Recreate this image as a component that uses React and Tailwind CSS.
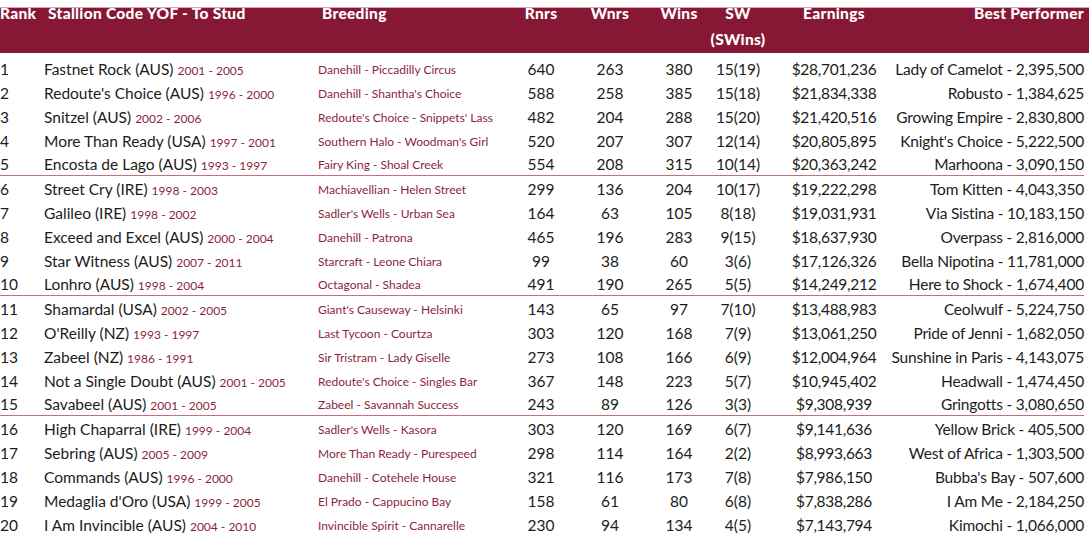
const rows = [
  ["1", "Fastnet Rock (AUS)", "2001 - 2005", "Danehill - Piccadilly Circus", "640", "263", "380", "15(19)", "$28,701,236", "Lady of Camelot - 2,395,500"],
  ["2", "Redoute's Choice (AUS)", "1996 - 2000", "Danehill - Shantha's Choice", "588", "258", "385", "15(18)", "$21,834,338", "Robusto - 1,384,625"],
  ["3", "Snitzel (AUS)", "2002 - 2006", "Redoute's Choice - Snippets' Lass", "482", "204", "288", "15(20)", "$21,420,516", "Growing Empire - 2,830,800"],
  ["4", "More Than Ready (USA)", "1997 - 2001", "Southern Halo - Woodman's Girl", "520", "207", "307", "12(14)", "$20,805,895", "Knight's Choice - 5,222,500"],
  ["5", "Encosta de Lago (AUS)", "1993 - 1997", "Fairy King - Shoal Creek", "554", "208", "315", "10(14)", "$20,363,242", "Marhoona - 3,090,150"],
  ["6", "Street Cry (IRE)", "1998 - 2003", "Machiavellian - Helen Street", "299", "136", "204", "10(17)", "$19,222,298", "Tom Kitten - 4,043,350"],
  ["7", "Galileo (IRE)", "1998 - 2002", "Sadler's Wells - Urban Sea", "164", "63", "105", "8(18)", "$19,031,931", "Via Sistina - 10,183,150"],
  ["8", "Exceed and Excel (AUS)", "2000 - 2004", "Danehill - Patrona", "465", "196", "283", "9(15)", "$18,637,930", "Overpass - 2,816,000"],
  ["9", "Star Witness (AUS)", "2007 - 2011", "Starcraft - Leone Chiara", "99", "38", "60", "3(6)", "$17,126,326", "Bella Nipotina - 11,781,000"],
  ["10", "Lonhro (AUS)", "1998 - 2004", "Octagonal - Shadea", "491", "190", "265", "5(5)", "$14,249,212", "Here to Shock - 1,674,400"],
  ["11", "Shamardal (USA)", "2002 - 2005", "Giant's Causeway - Helsinki", "143", "65", "97", "7(10)", "$13,488,983", "Ceolwulf - 5,224,750"],
  ["12", "O'Reilly (NZ)", "1993 - 1997", "Last Tycoon - Courtza", "303", "120", "168", "7(9)", "$13,061,250", "Pride of Jenni - 1,682,050"],
  ["13", "Zabeel (NZ)", "1986 - 1991", "Sir Tristram - Lady Giselle", "273", "108", "166", "6(9)", "$12,004,964", "Sunshine in Paris - 4,143,075"],
  ["14", "Not a Single Doubt (AUS)", "2001 - 2005", "Redoute's Choice - Singles Bar", "367", "148", "223", "5(7)", "$10,945,402", "Headwall - 1,474,450"],
  ["15", "Savabeel (AUS)", "2001 - 2005", "Zabeel - Savannah Success", "243", "89", "126", "3(3)", "$9,308,939", "Gringotts - 3,080,650"],
  ["16", "High Chaparral (IRE)", "1999 - 2004", "Sadler's Wells - Kasora", "303", "120", "169", "6(7)", "$9,141,636", "Yellow Brick - 405,500"],
  ["17", "Sebring (AUS)", "2005 - 2009", "More Than Ready - Purespeed", "298", "114", "164", "2(2)", "$8,993,663", "West of Africa - 1,303,500"],
  ["18", "Commands (AUS)", "1996 - 2000", "Danehill - Cotehele House", "321", "116", "173", "7(8)", "$7,986,150", "Bubba's Bay - 507,600"],
  ["19", "Medaglia d'Oro (USA)", "1999 - 2005", "El Prado - Cappucino Bay", "158", "61", "80", "6(8)", "$7,838,286", "I Am Me - 2,184,250"],
  ["20", "I Am Invincible (AUS)", "2004 - 2010", "Invincible Spirit - Cannarelle", "230", "94", "134", "4(5)", "$7,143,794", "Kimochi - 1,066,000"],
]

function Row({ r, divider }) {
  return (
    <div
      className={
        "flex h-[24px] items-center pt-[3px] text-[15.5px] text-[#1c1c1c] " +
        (divider ? "border-b border-[#c56f86]" : "")
      }
    >
      <div className="w-[44px] shrink-0">{r[0]}</div>
      <div className="w-[274px] shrink-0 whitespace-nowrap">
        {r[1]} <span className="text-[12px] text-[#8b1f40]">{r[2]}</span>
      </div>
      <div className="w-[192px] shrink-0 whitespace-nowrap text-[12px] text-[#8b1f40]">{r[3]}</div>
      <div className="w-[62px] shrink-0 text-center">{r[4]}</div>
      <div className="w-[76px] shrink-0 text-center">{r[5]}</div>
      <div className="w-[62px] shrink-0 text-center">{r[6]}</div>
      <div className="w-[56px] shrink-0 text-center">{r[7]}</div>
      <div className="flex w-[136px] shrink-0 justify-center whitespace-nowrap tracking-[-0.3px]">{r[8]}</div>
      <div className="flex w-[182px] shrink-0 justify-end whitespace-nowrap tracking-[-0.2px]">{r[9]}</div>
    </div>
  )
}

export default function App() {
  return (
    <div className="h-[555px] w-[1089px] overflow-hidden bg-white font-['Lato',sans-serif] leading-none">
      <div className="mt-[7px] h-[46px] border-t border-[#d7a3b2] bg-[#861836]">
        <div className="-mt-[8px] flex pr-[5px] text-[15.5px] font-black leading-[26px] tracking-[0.3px] text-white">
          <div className="w-[44px] shrink-0">Rank</div>
          <div className="w-[274px] shrink-0 whitespace-nowrap pl-[4px]">Stallion Code YOF - To Stud</div>
          <div className="w-[192px] shrink-0 pl-[4px]">Breeding</div>
          <div className="w-[62px] shrink-0 text-center">Rnrs</div>
          <div className="w-[76px] shrink-0 text-center">Wnrs</div>
          <div className="w-[62px] shrink-0 text-center">Wins</div>
          <div className="w-[56px] shrink-0 text-center">
            SW
            <br />
            <span className="-mx-[8px] block">(SWins)</span>
          </div>
          <div className="w-[136px] shrink-0 text-center">Earnings</div>
          <div className="w-[182px] shrink-0 whitespace-nowrap text-right">Best Performer</div>
        </div>
      </div>
      <div className="mt-[3px] pr-[5px]">
        {rows.map((r, i) => (
          <Row key={r[0]} r={r} divider={i === 4 || i === 9 || i === 14} />
        ))}
      </div>
    </div>
  )
}
